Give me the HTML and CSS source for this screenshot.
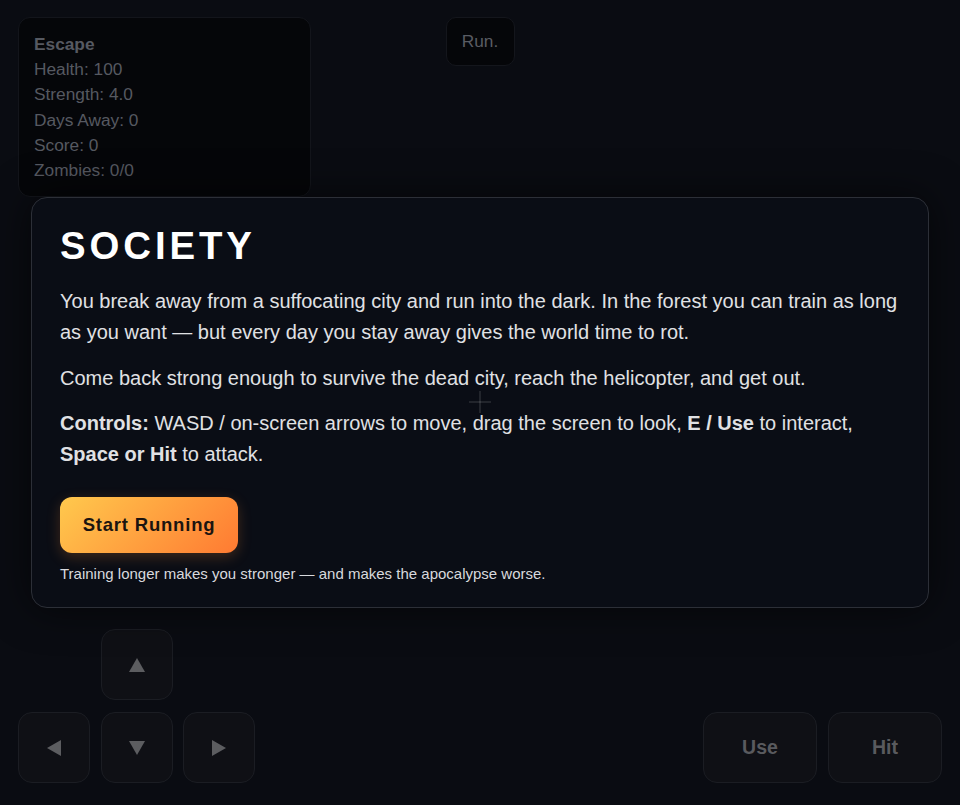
FILE: index.html
```html
<!DOCTYPE html>
<html lang="en">
<head>
    <meta charset="UTF-8">
    <meta name="viewport" content="width=device-width, initial-scale=1.0">
    <title>Society</title>
    <link rel="stylesheet" href="styles.css">
</head>
<body>
    <div class="game">
        <div class="top-bar">
            <div class="hud">
                <div class="hud-title">Escape</div>
                <div>Health: 100</div>
                <div>Strength: 4.0</div>
                <div>Days Away: 0</div>
                <div>Score: 0</div>
                <div>Zombies: 0/0</div>
            </div>
            <button class="run-btn">Run.</button>
            <div></div>
        </div>

        <div class="bottom-bar">
            <div class="dpad">
                <button class="pad-btn up">
                    <svg width="16" height="14" viewBox="0 0 16 14"><polygon points="8,0 16,14 0,14"/></svg>
                </button>
                <button class="pad-btn left">
                    <svg width="14" height="16" viewBox="0 0 14 16"><polygon points="0,8 14,0 14,16"/></svg>
                </button>
                <button class="pad-btn down">
                    <svg width="16" height="14" viewBox="0 0 16 14"><polygon points="0,0 16,0 8,14"/></svg>
                </button>
                <button class="pad-btn right">
                    <svg width="14" height="16" viewBox="0 0 14 16"><polygon points="0,0 14,8 0,16"/></svg>
                </button>
            </div>
            <div class="actions">
                <button class="act-btn">Use</button>
                <button class="act-btn">Hit</button>
            </div>
        </div>

        <div class="intro">
            <h1>SOCIETY</h1>
            <p>You break away from a suffocating city and run into the dark. In the forest you can train as long as you want — but every day you stay away gives the world time to rot.</p>
            <p>Come back strong enough to survive the dead city, reach the helicopter, and get out.</p>
            <p><b>Controls:</b> WASD / on-screen arrows to move, drag the screen to look, <b>E / Use</b> to interact, <b>Space or Hit</b> to attack.</p>
            <button class="start-btn">Start Running</button>
            <div class="note">Training longer makes you stronger — and makes the apocalypse worse.</div>
        </div>

        <div class="crosshair"></div>
    </div>
</body>
</html>
```

FILE: styles.css
```css
body {
    margin: 0;
    background-color: #0a0c12;
    font-family: "Liberation Sans", Arial, sans-serif;
    overflow: hidden;
}

.game {
    position: relative;
    height: 805px;
    box-sizing: border-box;
    padding: 17px 18px 22px;
    display: flex;
    flex-direction: column;
    justify-content: space-between;
}

.top-bar {
    display: grid;
    grid-template-columns: 1fr auto 1fr;
    align-items: start;
}

.hud {
    width: 293px;
    box-sizing: border-box;
    padding: 14px 15px 13px;
    background-color: #050609;
    border: 1px solid #13151b;
    border-radius: 12px;
    color: #565961;
    font-size: 17.3px;
    line-height: 25.2px;
}

.hud-title {
    font-weight: bold;
}

.run-btn {
    width: 69px;
    height: 49px;
    background-color: #050609;
    border: 1px solid #14161c;
    border-radius: 10px;
    color: #595c63;
    font-family: "Liberation Sans", Arial, sans-serif;
    font-size: 17.3px;
    padding: 0;
}

.bottom-bar {
    display: flex;
    justify-content: space-between;
    align-items: flex-end;
}

.dpad {
    display: grid;
    grid-template-columns: 72px 72px 72px;
    grid-template-rows: 71px 71px;
    column-gap: 10.5px;
    row-gap: 12px;
}

.pad-btn {
    background-color: #0f1015;
    border: 1px solid #1b1d23;
    border-radius: 14px;
    display: flex;
    align-items: center;
    justify-content: center;
    padding: 0;
}

.pad-btn svg {
    fill: #5c5d60;
}

.up { grid-column: 2; grid-row: 1; }
.left { grid-column: 1; grid-row: 2; }
.down { grid-column: 2; grid-row: 2; }
.right { grid-column: 3; grid-row: 2; }

.actions {
    display: flex;
    gap: 11px;
}

.act-btn {
    width: 114px;
    height: 71px;
    background-color: #0f1015;
    border: 1px solid #1b1d23;
    border-radius: 14px;
    color: #595a5e;
    font-family: "Liberation Sans", Arial, sans-serif;
    font-weight: bold;
    font-size: 19.5px;
}

/* faint aim cross in the middle of the screen */
.crosshair {
    position: absolute;
    left: 469px;
    top: 391px;
    width: 22px;
    height: 22px;
    pointer-events: none;
}

.crosshair::before,
.crosshair::after {
    content: "";
    position: absolute;
    background-color: rgba(255, 255, 255, 0.1);
}

.crosshair::before {
    left: 10px;
    top: 0;
    width: 2px;
    height: 22px;
}

.crosshair::after {
    left: 0;
    top: 10px;
    width: 22px;
    height: 2px;
}

.intro {
    position: absolute;
    left: 31px;
    top: 197px;
    width: 898px;
    height: 411px;
    box-sizing: border-box;
    padding: 25px 28px;
    background-color: #0a0d15;
    border: 1px solid #2c2f37;
    border-radius: 16px;
    box-shadow: 0 0 40px rgba(0, 0, 0, 0.6);
    color: #e0e1e4;
}

.intro h1 {
    margin: 0 0 17px;
    color: #ffffff;
    font-size: 38.4px;
    letter-spacing: 3.9px;
    line-height: 46px;
}

.intro p {
    margin: 0 0 14.5px;
    font-size: 20px;
    line-height: 31px;
}

.start-btn {
    margin-top: 12px;
    width: 178px;
    height: 56px;
    border: none;
    border-radius: 12px;
    background: linear-gradient(135deg, #ffc94d, #ff7a32);
    box-shadow: 0 4px 14px rgba(255, 140, 50, 0.22);
    color: #1b1410;
    font-family: "Liberation Sans", Arial, sans-serif;
    font-weight: bold;
    font-size: 18.5px;
    letter-spacing: 0.8px;
}

.note {
    margin-top: 12px;
    font-size: 15px;
    color: #d8d9dd;
}
```
